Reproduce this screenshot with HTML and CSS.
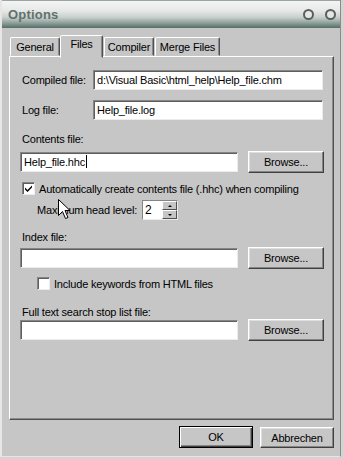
FILE: index.html
```html
<!DOCTYPE html>
<html lang="de">
<head>
    <meta charset="UTF-8">
    <meta name="viewport" content="width=device-width, initial-scale=1.0">
    <title>Options</title>
    <link rel="stylesheet" href="styles.css">
</head>
<body>
    <div class="window">
        <div class="titlebar">
            <span class="title">Options</span>
            <div class="controls">
                <span class="ring"></span>
                <span class="ring"></span>
            </div>
        </div>

        <div class="tabs">
            <div class="tab tab-general">General</div>
            <div class="tab tab-files active">Files</div>
            <div class="tab tab-compiler">Compiler</div>
            <div class="tab tab-merge">Merge Files</div>
        </div>

        <div class="panel">
            <div class="field">
                <span class="label">Compiled file:</span>
                <div class="textbox wide">d:\Visual Basic\html_help\Help_file.chm</div>
            </div>
            <div class="field field-log">
                <span class="label">Log file:</span>
                <div class="textbox wide">Help_file.log</div>
            </div>

            <div class="caption caption-contents">Contents file:</div>
            <div class="browse-row">
                <div class="textbox">Help_file.hhc<span class="caret"></span></div>
                <button class="button browse">Browse...</button>
            </div>

            <div class="check check-auto">
                <span class="box">
                    <svg width="9" height="9" viewBox="0 0 9 9"><path d="M1 3.5 L3.5 6 L8 1.5 L8 3.5 L3.5 8 L1 5.5 Z" fill="#000"/></svg>
                </span>
                Automatically create contents file (.hhc) when compiling
            </div>
            <div class="level">
                <span class="level-label">Maximum head level:</span>
                <div class="spin">
                    <div class="spin-value">2</div>
                    <div class="spin-buttons">
                        <span class="spin-btn"><i class="arrow-up"></i></span>
                        <span class="spin-btn"><i class="arrow-down"></i></span>
                    </div>
                </div>
            </div>

            <div class="caption caption-index">Index file:</div>
            <div class="browse-row">
                <div class="textbox"></div>
                <button class="button browse">Browse...</button>
            </div>
            <div class="check check-keywords">
                <span class="box"></span>
                Include keywords from HTML files
            </div>

            <div class="caption caption-stop">Full text search stop list file:</div>
            <div class="browse-row">
                <div class="textbox"></div>
                <button class="button browse">Browse...</button>
            </div>
        </div>

        <div class="actions">
            <button class="button default">OK</button>
            <button class="button">Abbrechen</button>
        </div>

        <svg class="cursor" width="13" height="21" viewBox="0 0 13 21">
            <path d="M0.5 0.5 L0.5 16.5 L4.5 12.5 L7.5 19.5 L10 18.5 L7 11.5 L12 11.5 Z" fill="#fff" stroke="#000" stroke-width="1"/>
        </svg>
    </div>
</body>
</html>
```

FILE: styles.css
```css
body {
    margin: 0;
    background-color: #d4d4d4;
    font-family: "Liberation Sans", Arial, sans-serif;
    font-size: 11px;
    letter-spacing: -0.2px;
    color: #000;
}

.window {
    position: relative;
    width: 341px;
    height: 457px;
    box-sizing: border-box;
    border-left: 2px solid #e6e6e6;
    border-right: 1px solid #8a8a8a;
    border-bottom: 1px solid #e6e6e6;
    background-color: #c6c6c6;
}

.titlebar {
    height: 28px;
    box-sizing: border-box;
    border-top: 1px solid #9aa4a0;
    display: flex;
    align-items: center;
    padding: 0 4px 0 6px;
    background: linear-gradient(to bottom, #f3f4f3 0%, #e7e9e8 35%, #c9d0cd 60%, #8c9e98 82%, #546e67 100%);
}

.title {
    font-size: 13px;
    font-weight: bold;
    letter-spacing: 0.2px;
    color: #5f716b;
}

.controls {
    margin-left: auto;
    display: flex;
    gap: 11px;
}

.ring {
    width: 11px;
    height: 11px;
    box-sizing: border-box;
    border-radius: 50%;
    border: 2px solid #5a5e5c;
    background-color: #e4e6e5;
}

/* tabs */

.tabs {
    height: 28px;
    display: flex;
    align-items: flex-end;
    padding-left: 8px;
}

.tab {
    height: 19px;
    box-sizing: border-box;
    padding-top: 3px;
    line-height: 13px;
    text-align: center;
    border: 1px solid;
    border-color: #fff #505050 transparent #fff;
    border-radius: 2px 2px 0 0;
    box-shadow: inset -1px 0 #8a8a8a;
}

.tab-general {
    width: 50px;
}

.tab-files {
    width: 43px;
}

.tab-compiler {
    width: 50px;
    margin-left: 1px;
}

.tab-merge {
    width: 65px;
    margin-left: 1px;
}

.tab.active {
    position: relative;
    z-index: 1;
    height: 23px;
    margin-bottom: -2px;
    padding-top: 2px;
    background-color: #c6c6c6;
}

/* panel */

.panel {
    width: 325px;
    height: 364px;
    box-sizing: border-box;
    margin-left: 7px;
    padding: 13px 0 0 10px;
    border: 1px solid;
    border-color: #fff #505050 #505050 #fff;
    box-shadow: inset -1px -1px #8a8a8a;
}

.field {
    display: flex;
    align-items: center;
}

.field-log {
    margin-top: 10px;
}

.label {
    width: 71px;
    margin-left: 2px;
}

.textbox {
    width: 218px;
    height: 20px;
    box-sizing: border-box;
    padding-left: 3px;
    line-height: 18px;
    white-space: nowrap;
    background-color: #fff;
    border: 1px solid;
    border-color: #858585 #ececec #ececec #858585;
    box-shadow: inset 1px 1px #5e5e5e;
}

.textbox.wide {
    width: 230px;
}

.caret {
    display: inline-block;
    width: 1px;
    height: 13px;
    margin-left: 1px;
    vertical-align: -2px;
    background-color: #000;
}

.caption {
    margin-left: 2px;
    line-height: 13px;
}

.caption-contents {
    margin-top: 13px;
    margin-bottom: 6px;
}

.caption-index {
    margin-top: 11px;
    margin-bottom: 4px;
}

.caption-stop {
    margin-top: 16px;
    margin-bottom: 1px;
}

.browse-row {
    height: 20px;
    display: flex;
    align-items: center;
    gap: 10px;
}

.button {
    height: 21px;
    box-sizing: border-box;
    padding: 0;
    font-family: inherit;
    font-size: 11px;
    letter-spacing: -0.2px;
    color: #000;
    background-color: #c6c6c6;
    border: 1px solid;
    border-color: #fff #404040 #404040 #fff;
    box-shadow: inset -1px -1px #858585, inset 1px 1px #dedede;
}

.browse {
    width: 76px;
    height: 22px;
}

.check {
    height: 13px;
    display: flex;
    align-items: center;
    gap: 4px;
}

.check-auto {
    margin: 10px 0 0 2px;
}

.check-keywords {
    margin: 9px 0 0 17px;
}

.box {
    width: 13px;
    height: 13px;
    box-sizing: border-box;
    display: flex;
    align-items: center;
    justify-content: center;
    background-color: #fff;
    border: 1px solid;
    border-color: #858585 #ececec #ececec #858585;
    box-shadow: inset 1px 1px #5e5e5e;
}

.level {
    height: 20px;
    margin: 5px 0 0 17px;
    display: flex;
    align-items: center;
}

.level-label {
    width: 105px;
}

.spin {
    width: 36px;
    height: 20px;
    box-sizing: border-box;
    display: flex;
    border: 1px solid;
    border-color: #858585 #ececec #ececec #858585;
    box-shadow: inset 1px 1px #5e5e5e;
}

.spin-value {
    width: 19px;
    padding: 1px 0 0 2px;
    box-sizing: border-box;
    line-height: 17px;
    font-size: 12px;
    background-color: #fff;
}

.spin-buttons {
    flex: 1;
    display: flex;
    flex-direction: column;
}

.spin-btn {
    flex: 1;
    display: flex;
    align-items: center;
    justify-content: center;
    border: 1px solid;
    border-color: #fff #505050 #505050 #fff;
}

.arrow-up,
.arrow-down {
    width: 0;
    height: 0;
    border-left: 2px solid transparent;
    border-right: 2px solid transparent;
}

.arrow-up {
    border-bottom: 2px solid #000;
}

.arrow-down {
    border-top: 2px solid #000;
}

/* bottom buttons */

.actions {
    display: flex;
    justify-content: flex-end;
    align-items: flex-start;
    gap: 7px;
    margin-top: 6px;
    padding-right: 6px;
}

.actions .button {
    width: 74px;
}

.button.default {
    height: 22px;
    border-color: #000;
    box-shadow: inset 1px 1px #fff, inset -1px -1px #404040, inset -2px -2px #858585;
}

.actions .button:not(.default) {
    margin-top: 1px;
}

.cursor {
    position: absolute;
    left: 56px;
    top: 199px;
}
```
